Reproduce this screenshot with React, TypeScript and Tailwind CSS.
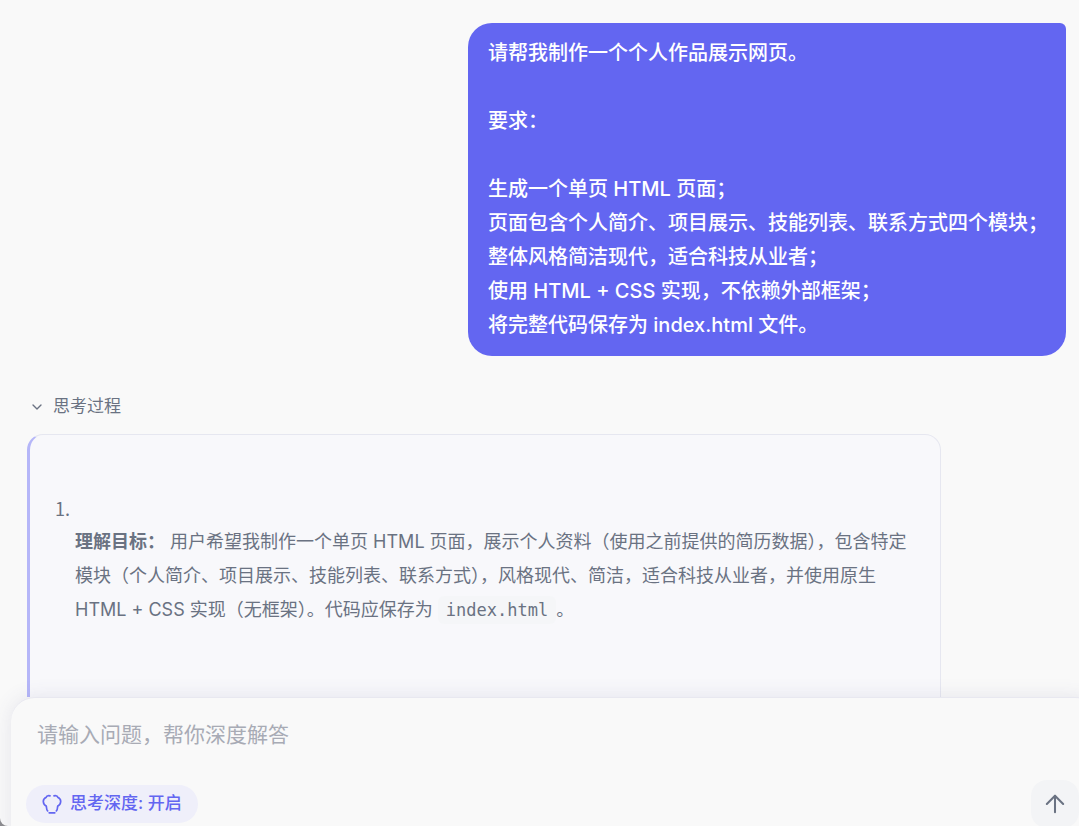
import { useState } from 'react';
import { ArrowUp, ChevronDown } from 'lucide-react';

const promptLines = [
  '请帮我制作一个个人作品展示网页。',
  '',
  '要求：',
  '',
  '生成一个单页 HTML 页面；',
  '页面包含个人简介、项目展示、技能列表、联系方式四个模块；',
  '整体风格简洁现代，适合科技从业者；',
  '使用 HTML + CSS 实现，不依赖外部框架；',
  '将完整代码保存为 index.html 文件。',
];

function DepthIcon() {
  return (
    <svg
      className="w-5 h-5"
      viewBox="0 0 20 20"
      fill="none"
      stroke="currentColor"
      strokeWidth="1.7"
      strokeLinecap="round"
      strokeLinejoin="round"
      aria-hidden="true"
    >
      <path d="M8 1.8C5.8 1.3 4.4 2.3 3.9 3.6 1.9 4.6 1.1 6.4 1.4 8.2c.2 1.9 1.2 3.2 2.9 3.9.4 1.6 0 3.6 1.3 4.8" />
      <path d="M12 1.8c2.2-.5 3.6.5 4.1 1.8 2 1 2.8 2.8 2.5 4.6-.2 1.9-1.2 3.2-2.9 3.9-.4 1.6 0 3.6-1.3 4.8" />
      <path d="M7.2 18.8h5.6" />
    </svg>
  );
}

export default function App() {
  const [open, setOpen] = useState(true);
  const [deep, setDeep] = useState(true);
  const [question, setQuestion] = useState('');

  return (
    <div className="h-screen overflow-hidden bg-[#8b8b8f] font-[Inter,'Noto_Sans_CJK_SC',sans-serif]" lang="zh-CN">
      <div className="h-full flex flex-col overflow-hidden rounded-bl-lg bg-[#f9f9f9]">
        <main className="flex-1 min-h-0 overflow-hidden pt-[23px]">
          {/* Message utilisateur */}
          <div className="flex justify-end pr-[13px]">
            <div className="rounded-3xl rounded-tr-md bg-[#6366f1] pl-5 pr-[18px] pt-[13px] pb-[14px] text-xl leading-[34px] font-medium text-white">
              {promptLines.map((line, i) => (
                <p key={i} className="min-h-[34px]">{line}</p>
              ))}
            </div>
          </div>

          <section className="mt-8 pl-[27px]">
            <button
              type="button"
              aria-expanded={open}
              onClick={() => setOpen(!open)}
              className="flex items-center gap-2 h-[38px] pl-0.5 text-[17px] text-gray-500"
            >
              <ChevronDown className="w-4 h-4" />
              思考过程
            </button>

            {open && (
              <div className="mt-2 mr-[138px] h-[400px] rounded-2xl border border-l-[3px] border-[#e6e7f0] border-l-[#b5b6f8] bg-[#f8f8fb] pt-14 pl-[25px] pr-[18px] text-lg leading-[34px] text-gray-500">
                <p className="font-['Noto_Sans_CJK_SC',sans-serif]">1.</p>
                <p className="pl-5">
                  <strong className="font-bold">理解目标：</strong>{' '}
                  用户希望我制作一个单页 HTML 页面，展示个人资料（使用之前提供的简历数据），包含特定模块（个人简介、项目展示、技能列表、联系方式），风格现代、简洁，适合科技从业者，并使用原生 HTML + CSS 实现（无框架）。代码应保存为{' '}
                  <code className="rounded-md bg-[#f5f6f8] px-2 py-1 font-['DejaVu_Sans_Mono',monospace] text-[17px]">index.html</code>
                  。
                </p>
              </div>
            )}
          </section>
        </main>

        {/* Zone de saisie */}
        <form
          onSubmit={e => e.preventDefault()}
          className="relative shrink-0 ml-[11px] -mr-5 -mb-[14px] rounded-t-3xl border-t border-[#e8e8f0] bg-[#f9f9f9] pt-[14px] pb-3 pl-[15px] pr-5 shadow-[0_0_20px_rgba(80,80,130,0.12)]"
        >
          <input
            type="text"
            aria-label="请输入问题"
            value={question}
            onChange={e => setQuestion(e.target.value)}
            placeholder="请输入问题，帮你深度解答"
            className="block w-full h-11 px-[11px] bg-transparent text-[21px] text-gray-700 placeholder:text-[#a8abb5] outline-none"
          />
          <div className="mt-6 flex items-center justify-between">
            <button
              type="button"
              aria-pressed={deep}
              onClick={() => setDeep(!deep)}
              className="flex items-center gap-2 h-[38px] rounded-full bg-[#efeffa] px-4 text-[17px] font-medium text-[#6366f1]"
            >
              <DepthIcon />
              思考深度: {deep ? '开启' : '关闭'}
            </button>
            <button
              type="submit"
              aria-label="发送"
              className="flex items-center justify-center w-12 h-12 rounded-2xl bg-[#f3f4f6] text-gray-500"
            >
              <ArrowUp className="w-7 h-7" strokeWidth={1.75} />
            </button>
          </div>
        </form>
      </div>
    </div>
  );
}
